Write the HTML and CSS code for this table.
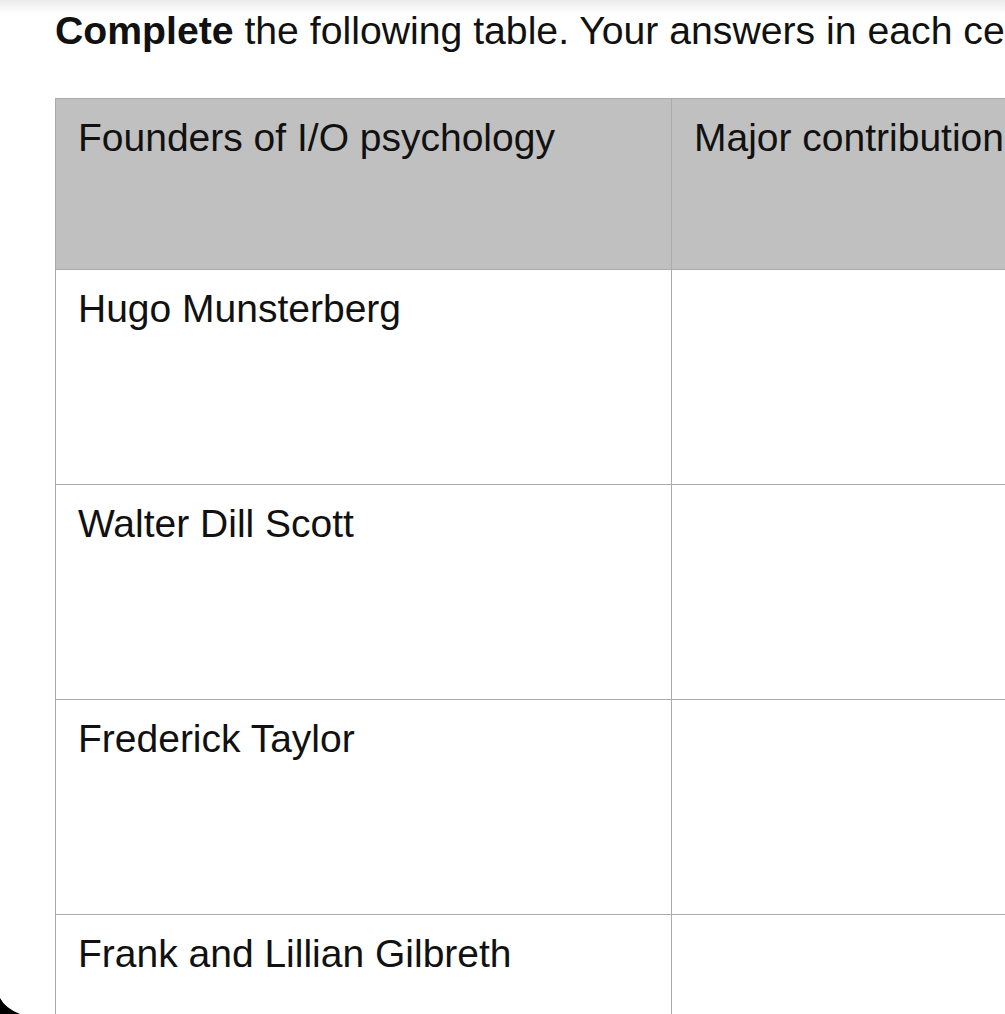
FILE: index.html
```html
<!DOCTYPE html>
<html lang="en">
<head>
<meta charset="utf-8">
<title>Founders of I/O psychology</title>
<link rel="stylesheet" href="styles.css">
</head>
<body>
<div class="page">
  <p class="intro"><strong>Complete</strong> the following table. Your answers in each ce</p>
  <div class="grid">
    <div class="cell head">Founders of I/O psychology</div>
    <div class="cell head">Major contribution</div>
    <div class="cell">Hugo Munsterberg</div>
    <div class="cell"></div>
    <div class="cell">Walter Dill Scott</div>
    <div class="cell"></div>
    <div class="cell">Frederick Taylor</div>
    <div class="cell"></div>
    <div class="cell">Frank and Lillian Gilbreth</div>
    <div class="cell"></div>
  </div>
</div>
<div class="top-shade"></div>
<svg class="corner" width="24" height="16" viewBox="0 0 24 16" aria-hidden="true">
  <path d="M0 0 Q5 10 20 16 L0 16 Z" fill="#000"/>
</svg>
</body>
</html>
```
FILE: styles.css
```css
html, body {
  margin: 0;
  padding: 0;
  background: #fff;
  overflow: hidden;
  height: 100%;
}
body {
  font-family: "Liberation Sans", Arial, sans-serif;
  color: #111;
  position: relative;
}
.page {
  padding-top: 8px;
}
.intro {
  margin: 0 0 45px 55px;
  font-size: 39.2px;
  line-height: 45px;
  height: 45px;
  white-space: nowrap;
}
.intro strong {
  font-weight: 700;
}
.grid {
  margin-left: 55px;
  display: grid;
  grid-template-columns: 616px 616px;
  grid-template-rows: 171px 215px 215px 215px 215px;
  border-top: 1px solid #ababab;
  border-left: 1px solid #ababab;
  width: max-content;
}
.cell {
  box-sizing: border-box;
  border-right: 1px solid #ababab;
  border-bottom: 1px solid #ababab;
  padding: 16px 20px 18px 22px;
  font-size: 39px;
  line-height: 45px;
  white-space: nowrap;
  overflow: hidden;
}
.head {
  background: #c0c0c0;
}
.top-shade {
  position: absolute;
  left: 0;
  top: 0;
  width: 100%;
  height: 14px;
  background: linear-gradient(to bottom, rgba(0,0,0,0.08), rgba(0,0,0,0));
  pointer-events: none;
}
.corner {
  position: absolute;
  left: 0;
  top: 998px;
  width: 24px;
  height: 16px;
}
```
